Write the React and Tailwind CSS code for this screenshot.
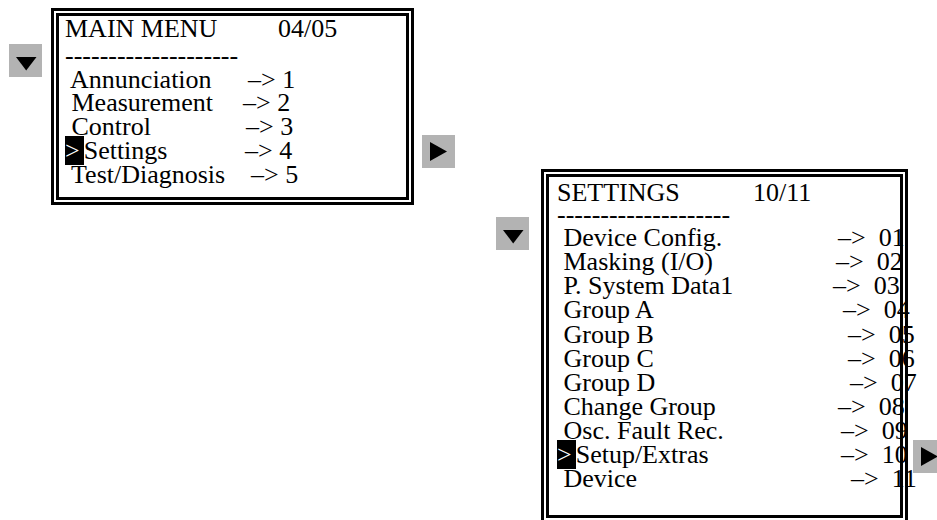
import React from "react";

const mainRows = [
  { label: " Annunciation", col: "w-[183px]", go: "–>\u00a01" },
  { label: " Measurement", col: "w-[178px]", go: "–>\u00a02" },
  { label: " Control", col: "w-[181px]", go: "–>\u00a03" },
  { label: "Settings", col: "w-[180px]", go: "–>\u00a04", active: true },
  { label: " Test/Diagnosis", col: "w-[186px]", go: "–>\u00a05" },
];

const settingRows = [
  { label: " Device Config.", col: "w-[281px]", go: "–>\u00a0\u00a001" },
  { label: " Masking (I/O)", col: "w-[279px]", go: "–>\u00a0\u00a002" },
  { label: " P. System Data1", col: "w-[276px]", go: "–>\u00a0\u00a003" },
  { label: " Group A", col: "w-[286px]", go: "–>\u00a0\u00a004" },
  { label: " Group B", col: "w-[291px]", go: "–>\u00a0\u00a005" },
  { label: " Group C", col: "w-[291px]", go: "–>\u00a0\u00a006" },
  { label: " Group D", col: "w-[293px]", go: "–>\u00a0\u00a007" },
  { label: " Change Group", col: "w-[281px]", go: "–>\u00a0\u00a008" },
  { label: " Osc. Fault Rec.", col: "w-[284px]", go: "–>\u00a0\u00a009" },
  { label: "Setup/Extras", col: "w-[284px]", go: "–>\u00a0\u00a010", active: true },
  { label: " Device", col: "w-[294px]", go: "–>\u00a0\u00a011" },
];

const DASHES = "--------------------";

// grey key with a black triangle
const Key = ({ dir, className = "" }) => (
  <div className={`shrink-0 w-[33px] h-[33px] bg-[#b3b3b3] ${className}`}>
    <svg width="33" height="33" viewBox="0 0 33 33">
      {dir === "down" ? (
        <polygon points="7,13 27.5,13 17.2,26.5" fill="#000" />
      ) : (
        <polygon points="8,7 8,26 25,16.5" fill="#000" />
      )}
    </svg>
  </div>
);

const Row = ({ row, lead }) => (
  <div className={`flex whitespace-pre ${lead}`}>
    <div className={`${row.col} shrink-0`}>
      {row.active && <span className="bg-black text-white pr-[4px]">&gt;</span>}
      {row.label}
    </div>
    <div>{row.go}</div>
  </div>
);

export default function App() {
  return (
    <div className="w-[937px] h-[520px] overflow-hidden bg-white text-black font-['Liberation_Serif',serif] text-[26px]">
      <div className="flex items-start">
        <Key dir="down" className="ml-[9px] mt-[44px]" />

        {/* ── MAIN MENU ── */}
        <div className="shrink-0 ml-[9px] mt-[8px] w-[363px] h-[197px] border-[3px] border-black p-[2px]">
          <div className="h-full border-[3px] border-black pl-[6px] pt-[1px] leading-[23.8px]">
            <div className="flex whitespace-pre">
              <div className="w-[213px] shrink-0">MAIN MENU</div>
              <div>04/05</div>
            </div>
            <div className="mt-[3px]">{DASHES}</div>
            {mainRows.map((r) => (
              <Row key={r.label} row={r} lead="" />
            ))}
          </div>
        </div>

        <Key dir="right" className="ml-[8px] mt-[135px]" />
        <Key dir="down" className="ml-[41px] mt-[217px]" />

        {/* ── SETTINGS ── */}
        <div className="shrink-0 ml-[12px] mt-[169px] w-[367px] h-[354px] border-[3px] border-black p-[2px]">
          <div className="h-full border-[3px] border-black pl-[8px] pt-[4px] leading-[24.1px]">
            <div className="flex whitespace-pre">
              <div className="w-[196px] shrink-0">SETTINGS</div>
              <div>10/11</div>
            </div>
            <div className="-mt-[2px]">{DASHES}</div>
            <div className="-mt-[1px]">
              {settingRows.map((r) => (
                <Row key={r.label} row={r} lead="" />
              ))}
            </div>
          </div>
        </div>

        <Key dir="right" className="ml-[5px] mt-[440px]" />
      </div>
    </div>
  );
}
